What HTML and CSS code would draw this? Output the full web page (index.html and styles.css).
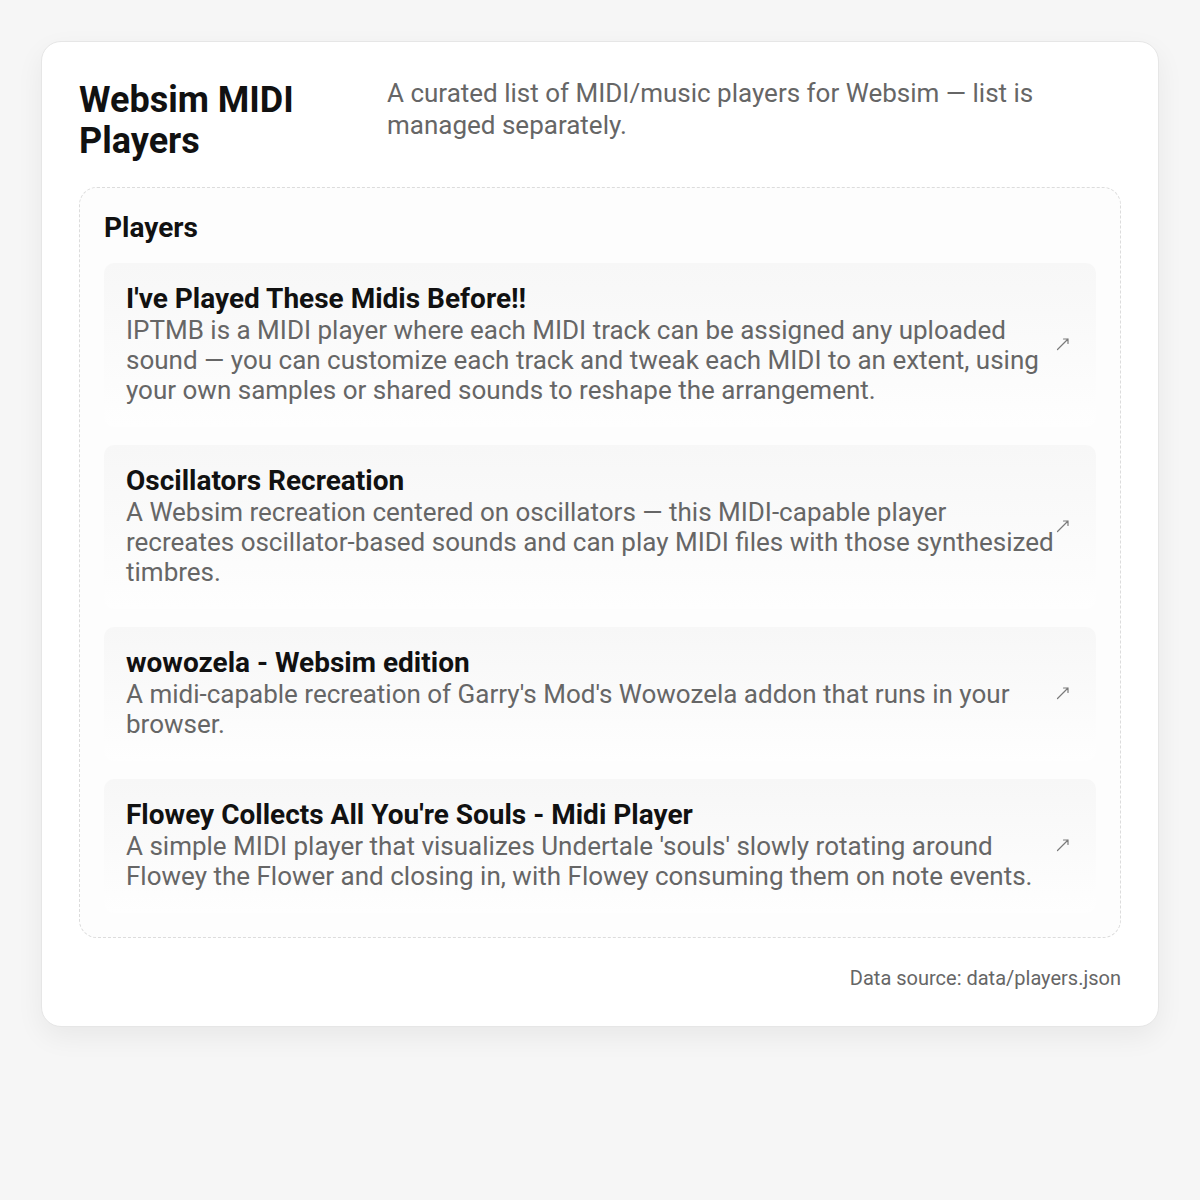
FILE: index.html
```html
<!DOCTYPE html>
<html lang="en">
<head>
<meta charset="utf-8">
<title>Websim MIDI Players</title>
<link rel="stylesheet" href="styles.css">
</head>
<body>
<main class="card">
  <header class="head">
    <h1 class="title">Websim MIDI Players</h1>
    <p class="lede">A curated list of MIDI/music players for Websim — list is managed separately.</p>
  </header>
  <section class="panel">
    <h2 class="panel-title">Players</h2>
    <ul class="list">
      <li class="item">
        <div class="item-text">
          <div class="item-name">I've Played These Midis Before!!</div>
          <div class="item-desc">IPTMB is a MIDI player where each MIDI track can be assigned any uploaded sound — you can customize each track and tweak each MIDI to an extent, using your own samples or shared sounds to reshape the arrangement.</div>
        </div>
        <svg class="arrow" viewBox="0 0 14 14" aria-hidden="true"><path d="M1.5 12.5 L12 2 M7.5 2 H12 V6.5"/></svg>
      </li>
      <li class="item">
        <div class="item-text">
          <div class="item-name">Oscillators Recreation</div>
          <div class="item-desc">A Websim recreation centered on oscillators — this MIDI-capable player recreates oscillator-based sounds and can play MIDI files with those synthesized timbres.</div>
        </div>
        <svg class="arrow" viewBox="0 0 14 14" aria-hidden="true"><path d="M1.5 12.5 L12 2 M7.5 2 H12 V6.5"/></svg>
      </li>
      <li class="item">
        <div class="item-text">
          <div class="item-name">wowozela - Websim edition</div>
          <div class="item-desc">A midi-capable recreation of Garry's Mod's Wowozela addon that runs in your browser.</div>
        </div>
        <svg class="arrow" viewBox="0 0 14 14" aria-hidden="true"><path d="M1.5 12.5 L12 2 M7.5 2 H12 V6.5"/></svg>
      </li>
      <li class="item">
        <div class="item-text">
          <div class="item-name">Flowey Collects All You're Souls - Midi Player</div>
          <div class="item-desc">A simple MIDI player that visualizes Undertale 'souls' slowly rotating around Flowey the Flower and closing in, with Flowey consuming them on note events.</div>
        </div>
        <svg class="arrow" viewBox="0 0 14 14" aria-hidden="true"><path d="M1.5 12.5 L12 2 M7.5 2 H12 V6.5"/></svg>
      </li>
    </ul>
  </section>
  <footer class="foot">Data source: data/players.json</footer>
</main>
</body>
</html>
```

FILE: styles.css
```css
* { box-sizing: border-box; }
html, body { margin: 0; padding: 0; }
body {
  background: #f6f6f6;
  font-family: Roboto, "Noto Sans", "Liberation Sans", sans-serif;
  color: #111;
  padding: 41px;
  min-height: 1200px;
}
.card {
  background: #fff;
  border: 1px solid #e6e6e6;
  border-radius: 20px;
  box-shadow: 0 10px 28px rgba(0, 0, 0, 0.06);
  padding: 38px 37px 36px;
}
.head {
  display: grid;
  grid-template-columns: 280px 1fr;
  column-gap: 28px;
  align-items: start;
  margin-bottom: 25px;
}
.title {
  margin: 0;
  font-size: 36px;
  line-height: 41px;
  font-weight: 700;
  color: #111;
}
.lede {
  margin: -3px 0 0;
  font-size: 26px;
  line-height: 32px;
  color: #666;
}
.panel {
  border: 1px dashed #dcdcdc;
  border-radius: 18px;
  background: #fdfdfd;
  padding: 23px 24px 24px;
}
.panel-title {
  margin: 0 0 18px;
  font-size: 28px;
  line-height: 34px;
  font-weight: 700;
  color: #111;
}
.list {
  list-style: none;
  margin: 0;
  padding: 0;
  display: flex;
  flex-direction: column;
  gap: 18px;
}
.item {
  display: flex;
  align-items: center;
  gap: 1px;
  padding: 20px 26px 22px 22px;
  border-radius: 10px;
  background: linear-gradient(180deg, #f7f7f7 0%, #fafafa 45%, #fefefe 100%);
}
.item-text {
  flex: 1;
  min-width: 0;
}
.item-name {
  font-size: 28px;
  line-height: 32px;
  font-weight: 700;
  color: #111;
}
.item-desc {
  font-size: 26px;
  line-height: 30px;
  color: #666;
}
.arrow {
  flex: none;
  width: 14px;
  height: 14px;
  fill: none;
  stroke: #7a7a7a;
  stroke-width: 1.2;
  stroke-linecap: round;
  stroke-linejoin: round;
}
.foot {
  margin-top: 28px;
  text-align: right;
  font-size: 20px;
  line-height: 24px;
  color: #666;
}
```
